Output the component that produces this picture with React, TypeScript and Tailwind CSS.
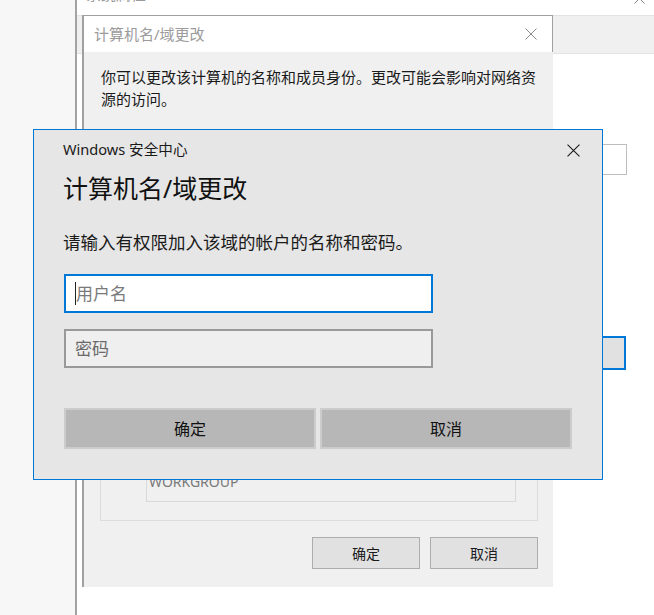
const CJK = "font-['Noto_Sans','Noto_Sans_CJK_SC',sans-serif]";

function CloseX({ size = 12, color = "#1a1a1a" }: { size?: number; color?: string }) {
  return (
    <svg width={size} height={size} viewBox="0 0 12 12" fill="none">
      <path d="M0.5 0.5L11.5 11.5M11.5 0.5L0.5 11.5" stroke={color} strokeWidth="1" />
    </svg>
  );
}

function SystemProperties() {
  return (
    <div className="absolute left-[75px] top-[-36px] w-[600px] h-[680px] bg-white border-l-2 border-[#a3a3a3]">
      {/* title bar, mostly off screen */}
      <div className="h-[51px] flex items-start justify-between pl-[9px] pr-[30px] pt-[20px]">
        <span className={`${CJK} text-[15px] leading-[20px] text-[#9a9a9a]`}>系统属性</span>
        <div className="pt-[9px]">
          <CloseX size={11} color="#777" />
        </div>
      </div>
      {/* tab strip */}
      <div className="h-[39px] bg-[#f0f0f0] border-t border-b border-[#e3e3e3]" />
      {/* textbox + focused button peeking out */}
      <div className="absolute left-[420px] top-[180px] w-[130px] h-[31px] border border-[#bdbdbd] bg-white" />
      <div className="absolute left-[420px] top-[372px] w-[129px] h-[34px] border-2 border-[#0078d7] bg-[#e1e1e1]" />
    </div>
  );
}

function ComputerNameDialog() {
  return (
    <div className="absolute left-[82px] top-[15px] w-[471px] h-[572px] flex flex-col border-t border-l-2 border-[#a0a0a0] bg-[#f0f0f0]">
      <div className="h-[36px] bg-white border-r border-[#a0a0a0] flex items-center justify-between pl-[10px] pr-[15px]">
        <span className={`${CJK} text-[15px] text-[#9b9b9b]`}>计算机名/域更改</span>
        <CloseX size={12} color="#8a8a8a" />
      </div>
      <div className="flex-1 flex flex-col pl-[17px] pr-[11px] pt-[14px] pb-[18px]">
        <p className={`${CJK} text-[15px] leading-[22px] text-[#1a1a1a] whitespace-nowrap`}>
          你可以更改该计算机的名称和成员身份。更改可能会影响对网络资
          <br />
          源的访问。
        </p>
        <div className="mt-auto ml-[-1px] w-[438px] h-[130px] border border-[#dcdcdc] flex flex-col justify-end pl-[45px] pr-[21px] pb-[18px]">
          <div className="h-[34px] border border-[#d9d9d9] bg-[#f0f0f0] pl-[2px]">
            <span className="font-['Noto_Sans',sans-serif] text-[14px] leading-[22px] text-[#7a7a7a]">WORKGROUP</span>
          </div>
        </div>
        <div className="mt-[16px] pr-[4px] flex justify-end gap-[10px]">
          <button className={`${CJK} w-[108px] h-[32px] bg-[#e1e1e1] border border-[#adadad] text-[14px] text-[#1a1a1a]`}>确定</button>
          <button className={`${CJK} w-[108px] h-[32px] bg-[#e1e1e1] border border-[#adadad] text-[14px] text-[#1a1a1a]`}>取消</button>
        </div>
      </div>
    </div>
  );
}

function SecurityDialog() {
  return (
    <div className={`absolute left-[33px] top-[129px] w-[570px] h-[351px] border border-[#0078d7] bg-[#e6e6e6] flex flex-col ${CJK}`}>
      <div className="mt-[10px] h-[20px] flex items-center justify-between pl-[29px] pr-[22px]">
        <span className="text-[14.6px] text-[#1a1a1a]">Windows 安全中心</span>
        <CloseX size={13} color="#1a1a1a" />
      </div>
      <h1 className="mt-[12px] h-[32px] pl-[29px] text-[25px] leading-[32px] text-[#111]">计算机名/域更改</h1>
      <p className="mt-[26px] h-[24px] pl-[29px] text-[17.5px] leading-[24px] text-[#1a1a1a]">
        请输入有权限加入该域的帐户的名称和密码。
      </p>
      <div className="mt-[20px] px-[30px] flex flex-col gap-[16px]">
        <div className="w-[369px] h-[39px] bg-white border-2 border-[#0078d7] flex items-center pl-[9px]">
          <span className="w-px h-[23px] bg-[#222]" />
          <span className="text-[17px] text-[#7a7a7a]">用户名</span>
        </div>
        <div className="w-[369px] h-[39px] bg-[#efefef] border-2 border-[#999] flex items-center pl-[9px]">
          <span className="text-[17px] text-[#6a6a6a]">密码</span>
        </div>
      </div>
      <div className="mt-[40px] px-[30px] grid grid-cols-2 gap-[4px]">
        <button className="h-[41px] bg-[#b7b7b7] border-2 border-[#cccccc] text-[16px] text-[#111]">确定</button>
        <button className="h-[41px] bg-[#b7b7b7] border-2 border-[#cccccc] text-[16px] text-[#111]">取消</button>
      </div>
    </div>
  );
}

export default function App() {
  return (
    <div className="relative w-[654px] h-[615px] overflow-hidden bg-[#f7f7f7]">
      <SystemProperties />
      <ComputerNameDialog />
      <SecurityDialog />
    </div>
  );
}
